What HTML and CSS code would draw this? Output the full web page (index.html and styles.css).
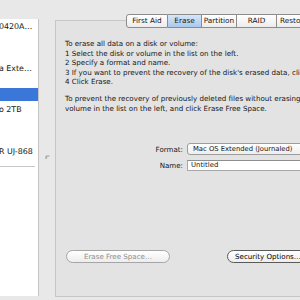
FILE: index.html
```html
<!DOCTYPE html>
<html lang="en">
<head>
    <meta charset="UTF-8">
    <title>Disk Utility</title>
    <link rel="stylesheet" href="styles.css">
</head>
<body>
    <div class="window">
        <!-- disk list, cut off on the left -->
        <ul class="disk-list">
            <li class="disk first">0420A…</li>
            <li class="disk gap">a Exte…</li>
            <li class="disk selected"></li>
            <li class="disk">o 2TB</li>
            <li class="disk gap">R UJ-868</li>
            <li class="separator"></li>
        </ul>

        <div class="splitter">
            <svg class="grip" width="5" height="4" viewBox="0 0 5 4">
                <path d="M4.5 1 L1 1 L1 3.5 M1 3.5 L0 2.5 M1 3.5 L2 2.5" fill="none" stroke="#8a8a8a" stroke-width="0.8"/>
            </svg>
        </div>

        <div class="panel">
            <div class="tabs">
                <span class="tab tab-aid">First Aid</span>
                <span class="tab tab-erase active">Erase</span>
                <span class="tab tab-part">Partition</span>
                <span class="tab tab-raid">RAID</span>
                <span class="tab tab-restore">Restore</span>
            </div>

            <div class="help">
                <p>To erase all data on a disk or volume:<br>
                1 Select the disk or volume in the list on the left.<br>
                2 Specify a format and name.<br>
                3 If you want to prevent the recovery of the disk's erased data, click<br>
                4 Click Erase.</p>
                <p>To prevent the recovery of previously deleted files without erasing t<br>
                volume in the list on the left, and click Erase Free Space.</p>
            </div>

            <div class="form-row">
                <span class="form-label">Format:</span>
                <span class="popup">Mac OS Extended (Journaled)</span>
            </div>
            <div class="form-row">
                <span class="form-label">Name:</span>
                <span class="field">Untitled</span>
            </div>

            <div class="buttons">
                <span class="button disabled">Erase Free Space…</span>
                <span class="button">Security Options…</span>
            </div>
        </div>
    </div>
</body>
</html>
```

FILE: styles.css
```css
body {
    margin: 0;
    background-color: #e8e8e8;
    font-family: "Lucida Grande", "DejaVu Sans", sans-serif;
    font-size: 7.1px;
    color: #141414;
}

.window {
    display: flex;
    width: 300px;
    height: 300px;
    overflow: hidden;
}

/* left disk list */
.disk-list {
    list-style: none;
    margin: 19px 0 0 0;
    padding: 0;
    width: 38px;
    height: 277px;
    flex-shrink: 0;
    background-color: #ffffff;
    border-right: 1px solid #c4c4c4;
    overflow: hidden;
    font-size: 7.9px;
}

.disk {
    height: 12px;
    line-height: 12px;
    white-space: nowrap;
    text-indent: -1px;
}

.disk.first {
    margin-top: 2px;
}

.disk.gap {
    margin-top: 30px;
}

.disk.selected {
    margin-top: 13px;
    height: 13px;
    background-color: #3b77d8;
}

.disk.selected + .disk {
    margin-top: 3px;
}

.separator {
    margin-top: 8px;
    width: 35px;
    height: 1px;
    background-color: #c9c9c9;
}

.splitter {
    width: 16px;
    flex-shrink: 0;
    display: flex;
    justify-content: center;
    padding-top: 155px;
    box-sizing: border-box;
}

.grip {
    display: block;
}

/* right tab box */
.panel {
    width: 250px;
    flex-shrink: 0;
    margin-top: 20px;
    height: 277px;
    box-sizing: border-box;
    background-color: #e3e3e3;
    border: 1px solid #c6c6c6;
    border-right: none;
}

.tabs {
    display: flex;
    margin: -7px 0 0 70px;
    height: 14px;
    font-size: 7.3px;
}

.tab {
    height: 14px;
    box-sizing: border-box;
    line-height: 12px;
    text-align: center;
    background: linear-gradient(#ffffff, #ececec);
    border: 1px solid #8c8c8c;
    border-left: none;
    flex-shrink: 0;
}

.tab-aid {
    width: 42px;
    border-left: 1px solid #8c8c8c;
    border-radius: 3px 0 0 3px;
}

.tab-erase {
    width: 34px;
}

.tab-part {
    width: 35px;
}

.tab-raid {
    width: 40px;
}

.tab-restore {
    width: 50px;
    text-align: left;
    padding-left: 3px;
}

.tab.active {
    background: linear-gradient(#d6e6f8, #a9c8ee);
}

.help {
    margin: 11px 0 0 9px;
    white-space: nowrap;
    line-height: 9.5px;
}

.help p {
    margin: 0 0 7.6px 0;
}

.form-row {
    display: flex;
    align-items: center;
    margin-top: 5px;
    width: 250px;
}

.help + .form-row {
    margin-top: 30px;
}

.form-label {
    display: block;
    flex: 0 0 127px;
    margin-right: 4px;
    text-align: right;
}

.popup {
    display: block;
    flex: 0 0 119px;
    height: 12px;
    box-sizing: border-box;
    line-height: 10px;
    padding-left: 5px;
    font-size: 6.8px;
    white-space: nowrap;
    background: linear-gradient(#ffffff, #eeeeee);
    border: 1px solid #9d9d9d;
    border-radius: 3px;
}

.field {
    display: block;
    flex: 0 0 119px;
    height: 11px;
    box-sizing: border-box;
    line-height: 9px;
    padding-left: 3px;
    font-size: 6.9px;
    background-color: #ffffff;
    border: 1px solid #a8a8a8;
    border-top-color: #8e8e8e;
}

.buttons {
    display: flex;
    gap: 57px;
    margin: 79px 0 0 10px;
}

.button {
    width: 82px;
    height: 13px;
    flex-shrink: 0;
    box-sizing: border-box;
    line-height: 11px;
    text-align: center;
    border: 1px solid #5a5a5a;
    border-radius: 7px;
    background: linear-gradient(#ffffff, #ededed);
    color: #000;
}

.button.disabled {
    width: 104px;
    border-color: #a6a6a6;
    color: #8e8e8e;
}
```
